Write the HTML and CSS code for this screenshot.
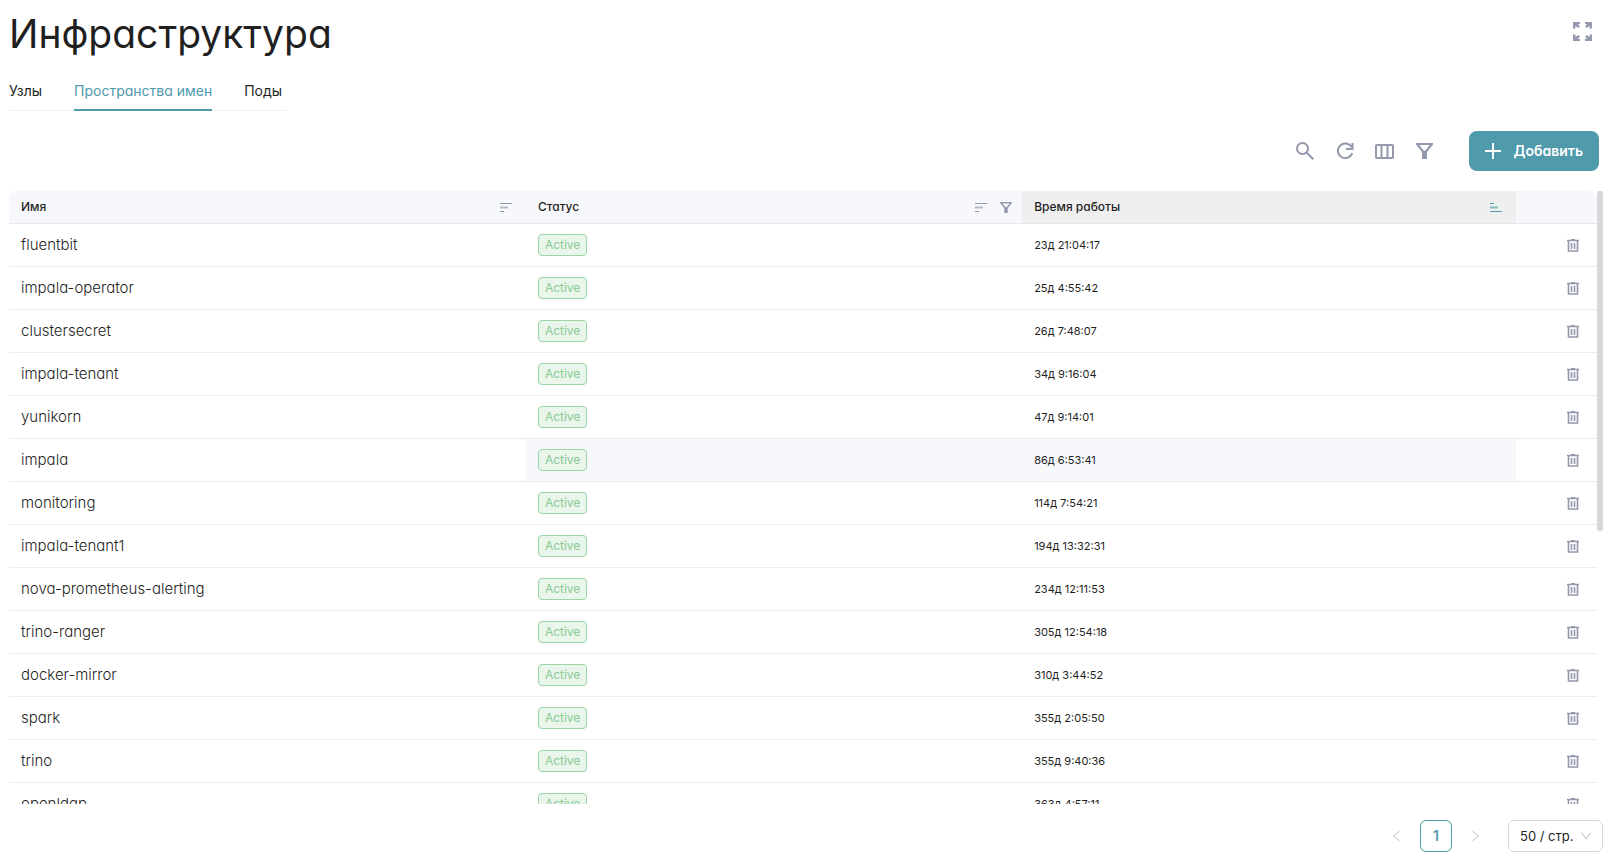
FILE: index.html
```html
<!DOCTYPE html>
<html lang="ru">
<head>
    <meta charset="UTF-8">
    <meta name="viewport" content="width=device-width, initial-scale=1.0">
    <title>Инфраструктура</title>
    <link rel="stylesheet" href="styles.css">
</head>
<body>

    <!-- Shared icons -->
    <svg class="sprite" aria-hidden="true">
        <symbol id="i-trash" viewBox="0 0 12 13">
            <path d="M0 1.500h12M4 .5h4M1.500 1.500v10.500h9V1.500M4.500 4v6M7.500 4v6" fill="none" stroke="currentColor" stroke-width="1.6"/>
        </symbol>
        <symbol id="i-sort" viewBox="0 0 12 9">
            <path d="M0 .5h12" stroke="currentColor"/>
            <path d="M0 4.500h8" stroke="currentColor" stroke-width="2" opacity=".65"/>
            <path d="M0 8.500h4" stroke="currentColor"/>
        </symbol>
        <symbol id="i-sort-asc" viewBox="0 0 12 9">
            <path d="M0 .5h4" stroke="currentColor"/>
            <path d="M0 4.500h8" stroke="currentColor" stroke-width="2" opacity=".65"/>
            <path d="M0 8.500h12" stroke="currentColor"/>
        </symbol>
        <symbol id="i-filter" viewBox="0 0 17 16">
            <path fill-rule="evenodd" d="M0 0h17v1.500L11 9v7H6V9L0 1.500zM3.300 2l4.500 5.800h1.400L13.700 2z" fill="currentColor"/>
        </symbol>
    </svg>

    <header class="header">
        <h1>Инфраструктура</h1>
        <button type="button" class="icon-btn" aria-label="На весь экран">
            <svg width="19" height="19" viewBox="0 0 19 19" fill="currentColor">
                <path id="corner" d="M0 0h7v2H4.800L7 4.200 5.200 6 2.500 3.700V6.500H0z"/>
                <use href="#corner" transform="matrix(-1 0 0 1 19 0)"/>
                <use href="#corner" transform="matrix(1 0 0 -1 0 19)"/>
                <use href="#corner" transform="matrix(-1 0 0 -1 19 19)"/>
            </svg>
        </button>
    </header>

    <nav class="tabs">
        <a href="#nodes">Узлы</a>
        <a href="#namespaces" class="active">Пространства имен</a>
        <a href="#pods">Поды</a>
    </nav>

    <div class="toolbar">
        <button type="button" class="icon-btn" aria-label="Поиск">
            <svg width="18" height="18" viewBox="0 0 18 18" fill="none" stroke="currentColor" stroke-width="2">
                <circle cx="6.500" cy="6.500" r="5.500"/>
                <path d="M10.500 10.500l6.800 6.800"/>
            </svg>
        </button>
        <button type="button" class="icon-btn" aria-label="Обновить">
            <svg width="18" height="18" viewBox="0 0 18 18" fill="none" stroke="currentColor" stroke-width="2">
                <path d="M15.500 5A7.300 7.300 0 1 0 16.200 11M16.500 1v6H10"/>
            </svg>
        </button>
        <button type="button" class="icon-btn" aria-label="Колонки">
            <svg width="19" height="15" viewBox="0 0 19 15" fill="none" stroke="currentColor" stroke-width="2">
                <rect x="1" y="1" width="17" height="13" rx="1"/>
                <path d="M6.500 1v13M12.500 1v13"/>
            </svg>
        </button>
        <button type="button" class="icon-btn" aria-label="Фильтр">
            <svg width="17" height="16"><use href="#i-filter"/></svg>
        </button>
        <button type="button" class="add-btn">
            <svg width="16" height="16" viewBox="0 0 16 16" fill="none" stroke="currentColor" stroke-width="2">
                <path d="M8 0v16M0 8h16"/>
            </svg>
            Добавить
        </button>
    </div>

    <main class="table-wrap">
        <table>
            <colgroup>
                <col class="col-name">
                <col class="col-status">
                <col class="col-uptime">
                <col class="col-actions">
            </colgroup>
            <thead>
                <tr>
                    <th>
                        <div class="th">
                            <span>Имя</span>
                            <svg width="12" height="9"><use href="#i-sort"/></svg>
                        </div>
                    </th>
                    <th class="filterable">
                        <div class="th">
                            <span>Статус</span>
                            <svg width="12" height="9"><use href="#i-sort"/></svg>
                            <svg width="12" height="11"><use href="#i-filter"/></svg>
                        </div>
                    </th>
                    <th class="sorted">
                        <div class="th">
                            <span>Время работы</span>
                            <svg width="12" height="9"><use href="#i-sort-asc"/></svg>
                        </div>
                    </th>
                    <th></th>
                </tr>
            </thead>
            <tbody id="rows"></tbody>
        </table>
        <div class="scrollbar"></div>
    </main>

    <footer class="pagination">
        <button type="button" class="page-arrow" aria-label="Назад">
            <svg width="8" height="10" viewBox="0 0 8 10" fill="none" stroke="currentColor"><path d="M7.500 .5L1 5l6.500 4.500"/></svg>
        </button>
        <button type="button" class="page">1</button>
        <button type="button" class="page-arrow" aria-label="Вперед">
            <svg width="8" height="10" viewBox="0 0 8 10" fill="none" stroke="currentColor"><path d="M.5 .5L7 5 .5 9.500"/></svg>
        </button>
        <div class="page-size">
            <select aria-label="Строк на странице">
                <option>50 / стр.</option>
                <option>100 / стр.</option>
            </select>
            <svg width="10" height="8" viewBox="0 0 10 8" fill="none" stroke="currentColor"><path d="M.5 .5L5 7 9.500 .5"/></svg>
        </div>
    </footer>

    <script>
        const namespaces = [
            ["fluentbit", "23д 21:04:17"],
            ["impala-operator", "25д 4:55:42"],
            ["clustersecret", "26д 7:48:07"],
            ["impala-tenant", "34д 9:16:04"],
            ["yunikorn", "47д 9:14:01"],
            ["impala", "86д 6:53:41", true],
            ["monitoring", "114д 7:54:21"],
            ["impala-tenant1", "194д 13:32:31"],
            ["nova-prometheus-alerting", "234д 12:11:53"],
            ["trino-ranger", "305д 12:54:18"],
            ["docker-mirror", "310д 3:44:52"],
            ["spark", "355д 2:05:50"],
            ["trino", "355д 9:40:36"],
            ["openldap", "363д 4:57:11"]
        ];

        document.getElementById("rows").innerHTML = namespaces.map(([name, uptime, hover]) => `
            <tr${hover ? ' class="hover"' : ""}>
                <td class="name">${name}</td>
                <td><span class="tag">Active</span></td>
                <td class="uptime">${uptime}</td>
                <td class="actions">
                    <button type="button" aria-label="Удалить ${name}"><svg width="12" height="13"><use href="#i-trash"/></svg></button>
                </td>
            </tr>`).join("");
    </script>

</body>
</html>
```
FILE: styles.css
```css
* { box-sizing: border-box; }

body {
    margin: 0;
    height: 100vh;
    padding: 8px 13px 11px 9px;
    display: flex;
    flex-direction: column;
    overflow: hidden;
    background: #fff;
    color: #1f1f1f;
    font-family: Inter, "Noto Sans", sans-serif;
    font-feature-settings: "cv11";
    font-size: 14px;
    line-height: 20px;
}

button, select { font: inherit; font-feature-settings: inherit; color: inherit; }
button { border: 0; padding: 0; background: none; cursor: pointer; }
svg { display: block; }
.sprite { position: absolute; width: 0; height: 0; }

.header {
    display: flex;
    justify-content: space-between;
    height: 64px;
}

h1 {
    margin: 0;
    font-size: 39px;
    font-weight: 400;
    line-height: 52px;
}

.icon-btn {
    width: 40px;
    height: 40px;
    display: flex;
    align-items: center;
    justify-content: center;
    color: #9498ad;
}

.header .icon-btn { margin: 3px 1px 0 0; }

.tabs {
    align-self: flex-start;
    display: flex;
    gap: 32px;
    padding-right: 4px;
    box-shadow: inset 0 -1px #f0f0f0;
}

.tabs a {
    padding: 9px 0 8px;
    border-bottom: 2px solid transparent;
    color: inherit;
    text-decoration: none;
}

.tabs a.active { color: #4f9aab; border-color: #4f9aab; }

.toolbar {
    display: flex;
    justify-content: flex-end;
    margin: 20px 4px 20px 0;
}

.add-btn {
    display: flex;
    align-items: center;
    gap: 13px;
    height: 40px;
    margin-left: 24px;
    padding: 0 16px;
    border-radius: 8px;
    background: #4f9aab;
    color: #fff;
    font-weight: 600;
}

.table-wrap {
    position: relative;
    flex: 1;
    min-height: 0;
    padding-right: 6px;
    overflow: hidden;
}

table {
    width: 100%;
    table-layout: fixed;
    border-collapse: separate;
    border-spacing: 0;
}

.col-name { width: 32.55%; }
.col-status { width: 31.25%; }
.col-uptime { width: 31.1%; }
.col-actions { width: 5.1%; }

th {
    height: 33px;
    padding: 0 14px 0 12px;
    background: #f7f8fc;
    border-bottom: 1px solid #e6e7ee;
    font-size: 12px;
    font-weight: 500;
    text-align: left;
}

th:first-child { border-top-left-radius: 8px; }
th:last-child { border-top-right-radius: 8px; }
th.filterable { padding-right: 10px; }
th.sorted { background: #efefef; }

.th { display: flex; align-items: center; gap: 13px; color: #9498ad; }
.th span { margin-right: auto; color: #1f1f1f; }
.sorted svg { color: #4f9aab; }

td {
    height: 43px;
    padding: 0 12px;
    border-bottom: 1px solid #ececf2;
}

.name { font-size: 15px; font-weight: 300; }
.uptime { font-size: 11px; }
.hover td:nth-child(2), .hover td:nth-child(3) { background: #f7f8fc; }

.tag {
    display: inline-block;
    vertical-align: middle;
    padding: 0 6px;
    border: 1px solid #9bd5a5;
    border-radius: 4px;
    background: #eaf5ec;
    color: #88cb93;
    font-size: 12px;
}

.actions button { display: block; margin-left: auto; margin-right: 6px; color: #9498ad; }

.scrollbar {
    position: absolute;
    top: 0;
    right: 0;
    width: 6px;
    height: 55.4%;
    border-radius: 2px;
    background: #d8d8da;
}

.pagination {
    display: flex;
    justify-content: flex-end;
    gap: 8px;
    margin-top: 16px;
}

.page, .page-arrow {
    width: 32px;
    height: 32px;
    display: flex;
    align-items: center;
    justify-content: center;
}

.page-arrow { color: #bfbfbf; }

.page {
    border: 1px solid #4f9aab;
    border-radius: 6px;
    color: #4f9aab;
    font-weight: 600;
}

.page-size { position: relative; margin-left: 8px; }

.page-size select {
    appearance: none;
    width: 95px;
    height: 32px;
    padding: 0 11px;
    border: 1px solid #d9d9d9;
    border-radius: 6px;
    background: #fff;
    font-size: 13px;
}

.page-size svg {
    position: absolute;
    top: 12px;
    right: 12px;
    color: #bfbfbf;
    pointer-events: none;
}
```
